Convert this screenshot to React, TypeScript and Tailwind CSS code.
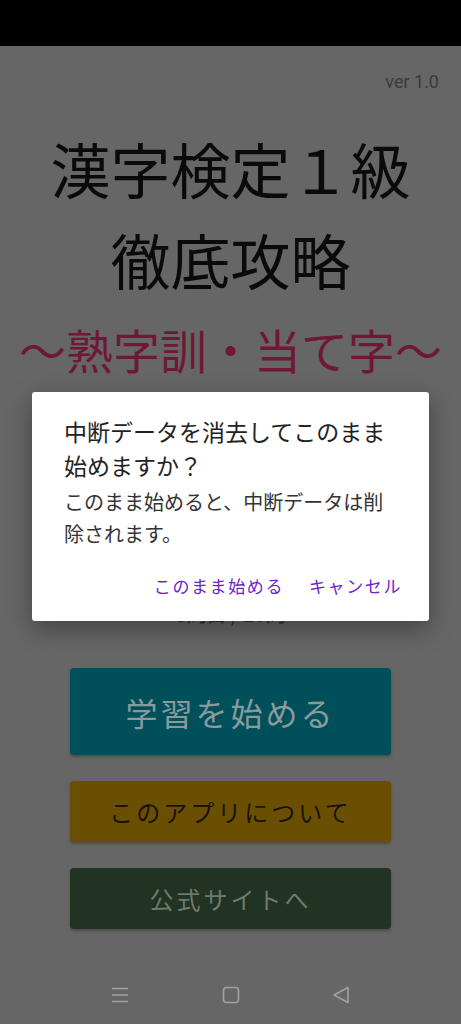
const jp = { fontFamily: '"Noto Sans CJK JP", "Noto Sans", sans-serif' };

function NavBar() {
  return (
    <div className="mt-auto h-[58px] flex items-center justify-between px-[110px]">
      <svg width="20" height="20" viewBox="0 0 20 20" fill="none" stroke="#a2a2a2" strokeWidth="1.6">
        <path d="M2 3.5h16M2 10h16M2 16.5h16" />
      </svg>
      <svg width="20" height="20" viewBox="0 0 20 20" fill="none" stroke="#a2a2a2" strokeWidth="1.6">
        <rect x="2.5" y="2.5" width="15" height="15" rx="3" />
      </svg>
      <svg width="20" height="20" viewBox="0 0 20 20" fill="none" stroke="#a2a2a2" strokeWidth="1.6" strokeLinejoin="round">
        <path d="M17 2.5v15L3 10z" />
      </svg>
    </div>
  );
}

function ConfirmDialog() {
  return (
    <div
      className="absolute left-[32px] top-[346px] w-[397px] bg-white rounded-[3px] shadow-[0_8px_24px_rgba(0,0,0,0.35)] pl-[32px] pr-[27px] pt-[22px] pb-[23px]"
      style={jp}
    >
      <p className="text-[23px] leading-[34px] text-[#222222]">
        中断データを消去してこのまま
        <br />
        始めますか？
      </p>
      <p className="mt-[4px] text-[20px] leading-[32px] text-[#333333]">
        このまま始めると、中断データは削
        <br />
        除されます。
      </p>
      <div className="mt-[24px] flex justify-end gap-[25px] text-[17px] leading-[24px] tracking-[1.6px] text-[#6a22cf]">
        <span>このまま始める</span>
        <span>キャンセル</span>
      </div>
    </div>
  );
}

export default function App() {
  return (
    <div className="w-[461px] h-[1024px] overflow-hidden flex flex-col bg-[#666666]">
      <div className="h-[46px] bg-black shrink-0" />
      <div className="relative flex-1 flex flex-col">
        <div className="pt-[24px] pr-[22px] text-right text-[18px] leading-[24px] text-[#3a3a3a]" style={{ fontFamily: 'Roboto, "Noto Sans", sans-serif' }}>
          ver 1.0
        </div>
        <h1 className="mt-[28px] text-center text-[60px] leading-[91px] text-[#0a0a0a]" style={jp}>
          漢字検定１級
          <br />
          徹底攻略
        </h1>
        <div className="mt-[17px] text-center text-[47px] leading-[56px] text-[#6e1836] whitespace-nowrap" style={jp}>
          〜熟字訓・当て字〜
        </div>
        <div className="mt-[223px] text-center text-[20px] leading-[28px] text-[#2a2a2a]" style={jp}>
          5問目 / 20問
        </div>
        <div className="mt-[40px] mx-[70px] flex flex-col gap-[26px]" style={jp}>
          <div className="h-[87px] rounded-[4px] bg-[#00505b] shadow-[0_2px_3px_rgba(0,0,0,0.25)] flex items-center justify-center text-[32px] tracking-[3px] text-[#8a9a9b]">
            学習を始める
          </div>
          <div className="h-[61px] rounded-[4px] bg-[#6a4f02] shadow-[0_2px_3px_rgba(0,0,0,0.25)] flex items-center justify-center text-[24px] tracking-[3px] text-[#1a1405]">
            このアプリについて
          </div>
          <div className="h-[61px] rounded-[4px] bg-[#223223] shadow-[0_2px_3px_rgba(0,0,0,0.25)] flex items-center justify-center text-[24px] tracking-[3px] text-[#6d7a6d]">
            公式サイトへ
          </div>
        </div>
        <NavBar />
        <ConfirmDialog />
      </div>
    </div>
  );
}
